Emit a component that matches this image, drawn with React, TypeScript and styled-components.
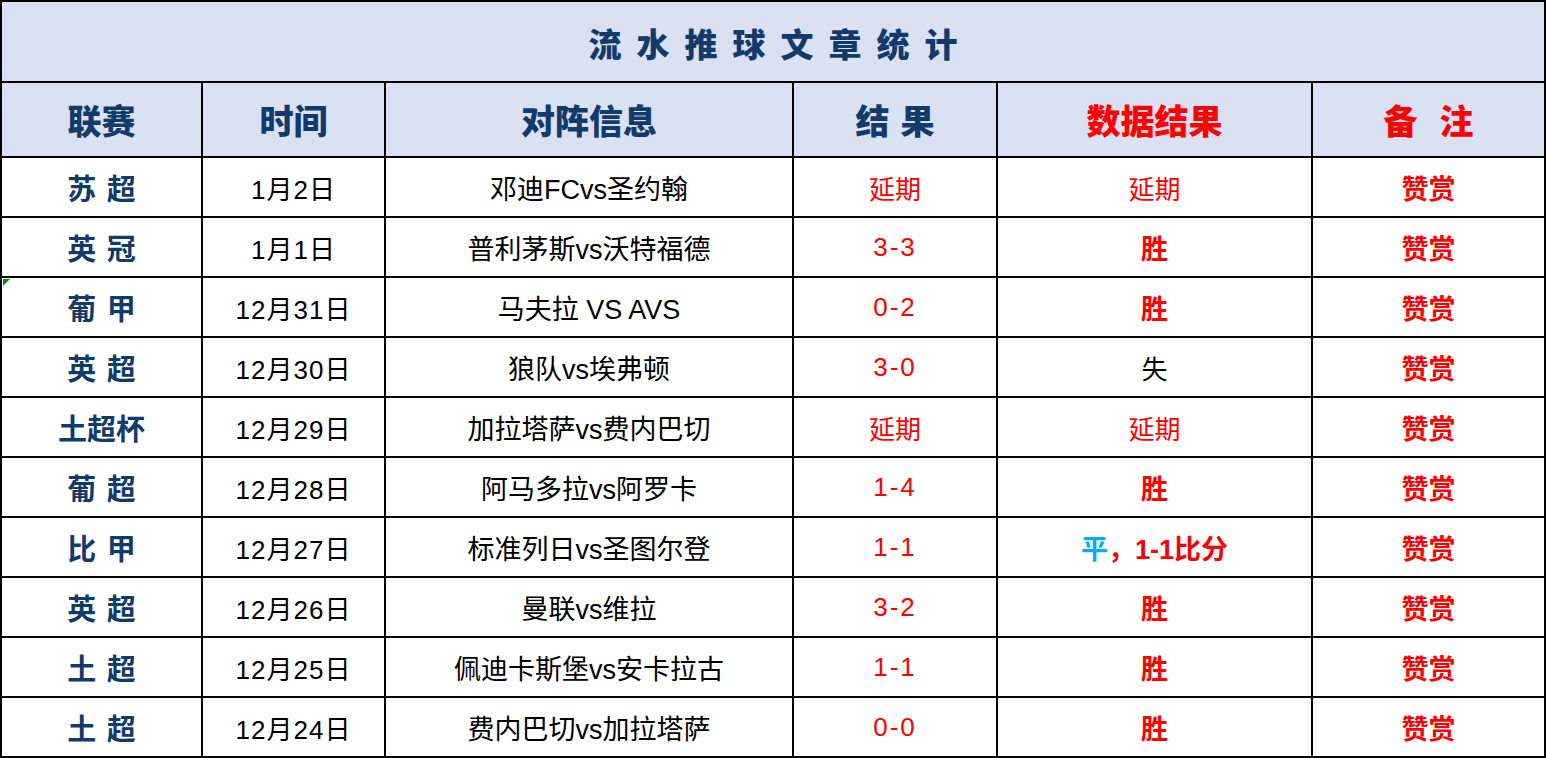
import React from "react";
import styled, { createGlobalStyle } from "styled-components";

const GlobalStyle = createGlobalStyle`
  html, body {
    margin: 0;
    padding: 0;
    background: #ffffff;
  }
  body {
    font-family: "Liberation Sans", "Noto Sans CJK SC", sans-serif;
  }
`;

const NAVY = "#123a6b";
const RED = "#ff0000";
const BLUE = "#00b0f0";
const HEAD_BG = "#d9e1f2";

const Sheet = styled.div`
  display: grid;
  grid-template-columns: 199px 181px 406px 202px 313px 231px;
  grid-template-rows: 79px 73px repeat(10, 58px);
  gap: 2px;
  padding: 2px;
  background: #000;
  width: max-content;
`;

const TitleCell = styled.div`
  grid-column: 1 / -1;
  background: ${HEAD_BG};
  display: flex;
  align-items: center;
  justify-content: center;
  padding: 2px 0 0 15px;
  color: ${NAVY};
  font-family: "Noto Sans CJK SC", sans-serif;
  font-size: 33px;
  font-weight: 900;
  letter-spacing: 15px;
`;

const HeadCell = styled.div<{ $red?: boolean; $gap?: number }>`
  background: ${HEAD_BG};
  display: flex;
  align-items: center;
  justify-content: center;
  color: ${(p) => (p.$red ? RED : NAVY)};
  font-family: "Noto Sans CJK SC", sans-serif;
  font-size: 34px;
  font-weight: 900;
  white-space: pre;
  word-spacing: ${(p) => p.$gap ?? 3}px;
`;

const Cell = styled.div<{ $color?: string; $bold?: boolean; $size?: number; $track?: number }>`
  position: relative;
  background: #fff;
  display: flex;
  align-items: center;
  justify-content: center;
  color: ${(p) => p.$color || "#000"};
  font-family: "Liberation Sans", "Noto Sans CJK SC", sans-serif;
  font-size: ${(p) => p.$size || 26}px;
  font-weight: ${(p) => (p.$bold ? 700 : 400)};
  letter-spacing: ${(p) => p.$track || 0}px;
  white-space: pre;
`;

const LeagueCell = styled(Cell)`
  font-family: "Noto Sans CJK SC", sans-serif;
  color: ${NAVY};
  font-size: 29px;
  font-weight: 700;
  word-spacing: 4px;
`;

const Marker = styled.span`
  position: absolute;
  top: 1px;
  left: 1px;
  width: 0;
  height: 0;
  border-top: 7px solid #0a8a0a;
  border-right: 7px solid transparent;
`;

const Blue = styled.span`
  color: ${BLUE};
`;

type Row = {
  league: string;
  date: string;
  match: string;
  score: string;
  data: React.ReactNode;
  dataColor: string;
  dataBold: boolean;
  marker?: boolean;
};

const rows: Row[] = [
  { league: "苏 超", date: "1月2日", match: "邓迪FCvs圣约翰", score: "延期", data: "延期", dataColor: RED, dataBold: false },
  { league: "英 冠", date: "1月1日", match: "普利茅斯vs沃特福德", score: "3-3", data: "胜", dataColor: RED, dataBold: true },
  { league: "葡 甲", date: "12月31日", match: "马夫拉 VS AVS", score: "0-2", data: "胜", dataColor: RED, dataBold: true, marker: true },
  { league: "英 超", date: "12月30日", match: "狼队vs埃弗顿", score: "3-0", data: "失", dataColor: "#000", dataBold: false },
  { league: "土超杯", date: "12月29日", match: "加拉塔萨vs费内巴切", score: "延期", data: "延期", dataColor: RED, dataBold: false },
  { league: "葡 超", date: "12月28日", match: "阿马多拉vs阿罗卡", score: "1-4", data: "胜", dataColor: RED, dataBold: true },
  {
    league: "比 甲",
    date: "12月27日",
    match: "标准列日vs圣图尔登",
    score: "1-1",
    data: (
      <>
        <Blue>平</Blue>，1-1比分
      </>
    ),
    dataColor: RED,
    dataBold: true,
  },
  { league: "英 超", date: "12月26日", match: "曼联vs维拉", score: "3-2", data: "胜", dataColor: RED, dataBold: true },
  { league: "土 超", date: "12月25日", match: "佩迪卡斯堡vs安卡拉古", score: "1-1", data: "胜", dataColor: RED, dataBold: true },
  { league: "土 超", date: "12月24日", match: "费内巴切vs加拉塔萨", score: "0-0", data: "胜", dataColor: RED, dataBold: true },
];

export default function App() {
  return (
    <>
      <GlobalStyle />
      <Sheet>
        <TitleCell>流水推球文章统计</TitleCell>
        <HeadCell>联赛</HeadCell>
        <HeadCell>时间</HeadCell>
        <HeadCell>对阵信息</HeadCell>
        <HeadCell>结 果</HeadCell>
        <HeadCell $red>数据结果</HeadCell>
        <HeadCell $red $gap={14}>备 注</HeadCell>
        {rows.map((r, i) => (
          <React.Fragment key={i}>
            <LeagueCell>
              {r.marker && <Marker />}
              {r.league}
            </LeagueCell>
            <Cell $track={1}>{r.date}</Cell>
            <Cell $size={27}>{r.match}</Cell>
            <Cell $color={RED} $track={/\d/.test(r.score) ? 2 : 0}>
              {r.score}
            </Cell>
            <Cell $color={r.dataColor} $bold={r.dataBold} $size={r.dataBold ? 27 : 26}>
              {r.data}
            </Cell>
            <Cell $color={RED} $bold $size={27}>
              赞赏
            </Cell>
          </React.Fragment>
        ))}
      </Sheet>
    </>
  );
}
